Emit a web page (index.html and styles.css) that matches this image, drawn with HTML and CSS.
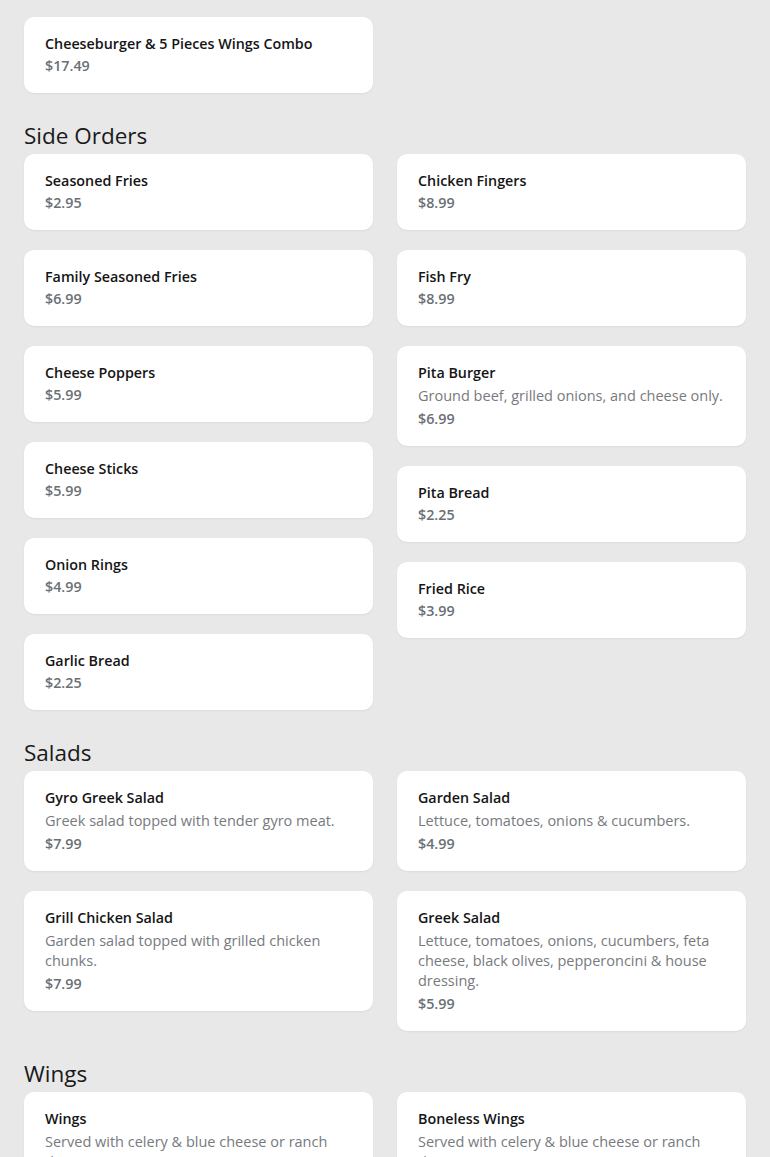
FILE: index.html
```html
<!DOCTYPE html>
<html>
<head>
<meta charset="utf-8">
<link rel="stylesheet" href="styles.css">
</head>
<body>
<div class="page">
  <section class="section section-first">
    <div class="cols">
      <div class="col">
        <div class="card card-stub"></div>
        <div class="card"><div class="name">Cheeseburger &amp; 5 Pieces Wings Combo</div><div class="price">$17.49</div></div>
      </div>
      <div class="col">
        <div class="card card-stub"></div>
      </div>
    </div>
  </section>

  <section class="section">
    <h2 class="heading">Side Orders</h2>
    <div class="cols">
      <div class="col">
        <div class="card"><div class="name">Seasoned Fries</div><div class="price">$2.95</div></div>
        <div class="card"><div class="name">Family Seasoned Fries</div><div class="price">$6.99</div></div>
        <div class="card"><div class="name">Cheese Poppers</div><div class="price">$5.99</div></div>
        <div class="card"><div class="name">Cheese Sticks</div><div class="price">$5.99</div></div>
        <div class="card"><div class="name">Onion Rings</div><div class="price">$4.99</div></div>
        <div class="card"><div class="name">Garlic Bread</div><div class="price">$2.25</div></div>
      </div>
      <div class="col">
        <div class="card"><div class="name">Chicken Fingers</div><div class="price">$8.99</div></div>
        <div class="card"><div class="name">Fish Fry</div><div class="price">$8.99</div></div>
        <div class="card"><div class="name">Pita Burger</div><div class="desc">Ground beef, grilled onions, and cheese only.</div><div class="price">$6.99</div></div>
        <div class="card"><div class="name">Pita Bread</div><div class="price">$2.25</div></div>
        <div class="card"><div class="name">Fried Rice</div><div class="price">$3.99</div></div>
      </div>
    </div>
  </section>

  <section class="section">
    <h2 class="heading">Salads</h2>
    <div class="cols">
      <div class="col">
        <div class="card"><div class="name">Gyro Greek Salad</div><div class="desc">Greek salad topped with tender gyro meat.</div><div class="price">$7.99</div></div>
        <div class="card"><div class="name">Grill Chicken Salad</div><div class="desc">Garden salad topped with grilled chicken chunks.</div><div class="price">$7.99</div></div>
      </div>
      <div class="col">
        <div class="card"><div class="name">Garden Salad</div><div class="desc">Lettuce, tomatoes, onions &amp; cucumbers.</div><div class="price">$4.99</div></div>
        <div class="card"><div class="name">Greek Salad</div><div class="desc">Lettuce, tomatoes, onions, cucumbers, feta cheese, black olives, pepperoncini &amp; house dressing.</div><div class="price">$5.99</div></div>
      </div>
    </div>
  </section>

  <section class="section">
    <h2 class="heading">Wings</h2>
    <div class="cols">
      <div class="col">
        <div class="card"><div class="name">Wings</div><div class="desc">Served with celery &amp; blue cheese or ranch dressing.</div><div class="price">$8.99</div></div>
      </div>
      <div class="col">
        <div class="card"><div class="name">Boneless Wings</div><div class="desc">Served with celery &amp; blue cheese or ranch dressing.</div><div class="price">$8.99</div></div>
      </div>
    </div>
  </section>
</div>
</body>
</html>
```
FILE: styles.css
```css
html, body {
  margin: 0;
  padding: 0;
  background: #e8e8e8;
  font-family: "Open Sans", "Liberation Sans", sans-serif;
  overflow: hidden;
}
.page {
  padding: 0 24px;
  margin-top: -13px;
}
.section {
  margin-top: 28px;
}
.section-first {
  margin-top: 0;
}
.heading {
  margin: 0 0 3px 0;
  font-size: 22.5px;
  line-height: 30px;
  font-weight: 400;
  color: #1a1a1a;
}
.cols {
  display: flex;
  gap: 24px;
  align-items: flex-start;
}
.col {
  flex: 1 1 0;
  display: flex;
  flex-direction: column;
  gap: 20px;
  min-width: 0;
}
.card {
  background: #fff;
  border-radius: 10px;
  padding: 16px 20px 16px 21px;
  box-shadow: 0 1px 2px rgba(0,0,0,0.06);
}
.card-stub {
  height: 10px;
  padding: 0;
}
.name {
  font-size: 14.3px;
  line-height: 22px;
  font-weight: 600;
  color: #151515;
}
.desc {
  font-size: 14.5px;
  line-height: 20px;
  color: #777a7e;
  margin: 2px 0;
}
.price {
  font-size: 14.3px;
  line-height: 22px;
  font-weight: 600;
  color: #6b6f76;
}
```
